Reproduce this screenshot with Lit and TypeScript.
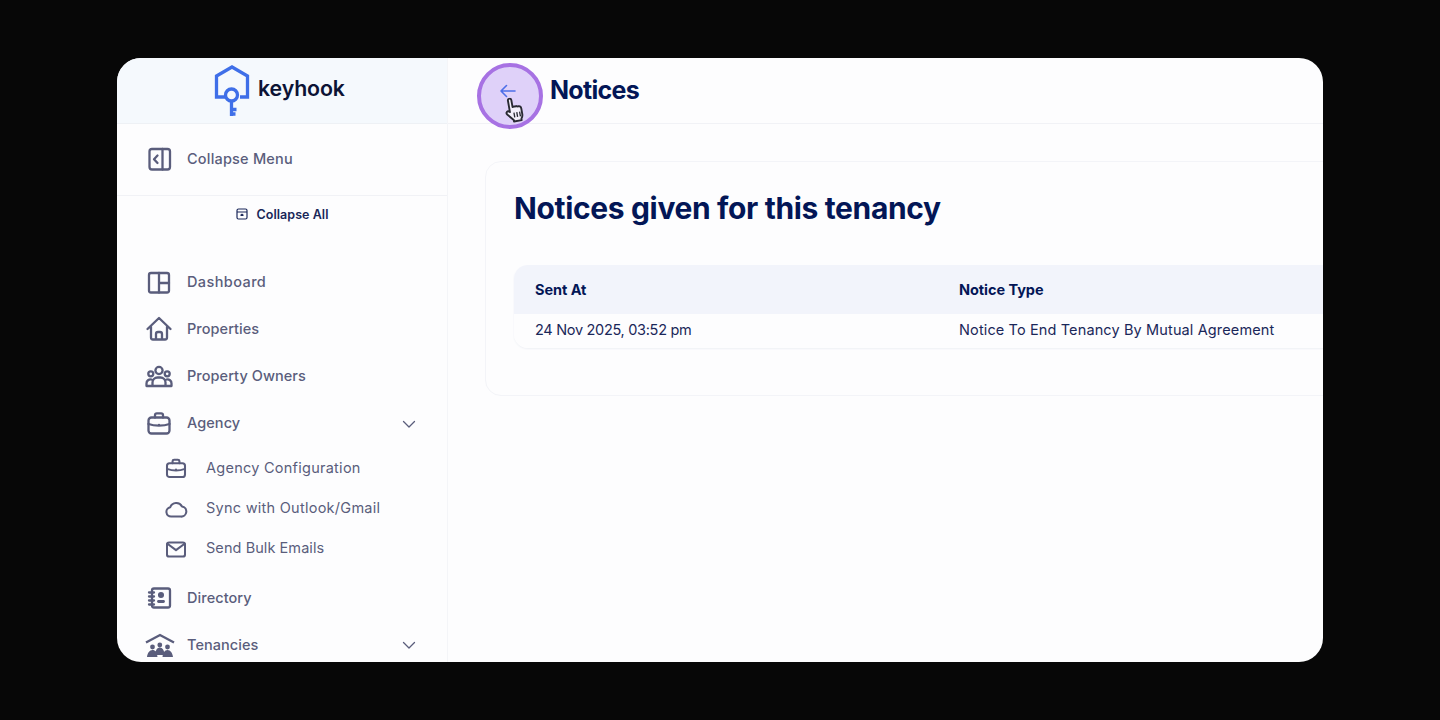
import { LitElement, html, css, svg } from "lit";
import { customElement } from "lit/decorators.js";

const ic = (c: unknown, size = 28, sw = 2.3) => html`<svg width=${size} height=${size} viewBox="0 0 28 28" fill="none" stroke="currentColor" stroke-width=${sw} stroke-linecap="round" stroke-linejoin="round">${c}</svg>`;

const briefShape = svg`<rect x="3.500" y="8.500" width="21" height="16" rx="3"/><path d="M10 8.500V6A1.800 1.800 0 0 1 11.800 4.300h4.400A1.800 1.800 0 0 1 18 6v2.500M3.500 15c6 2.200 15 2.200 21 0M14 15.800v.4"/>`;

const icons = {
  collapse: ic(svg`<rect x="3.500" y="4" width="20.500" height="20.500" rx="2.500"/><path d="M16.500 4v20.500M11.500 10.500 8 14.200l3.500 3.800"/>`),
  dash: ic(svg`<rect x="4" y="5" width="20" height="19.500" rx="2"/><path d="M14 5v19.500M14 15h10"/>`),
  home: ic(svg`<path d="M2.500 14 14 3l11.500 11M6 11.500V22.500a2 2 0 0 0 2 2h12a2 2 0 0 0 2-2V11.500M11 24.500V19a2 2 0 0 1 2-2h2a2 2 0 0 1 2 2v5.500"/>`),
  owners: ic(svg`<circle cx="14" cy="8.500" r="3.600"/><circle cx="5.800" cy="11.800" r="2.500"/><circle cx="22.200" cy="11.800" r="2.500"/><path d="M1.500 24v-2.500a4 4 0 0 1 5-4M26.500 24v-2.500a4 4 0 0 0-5-4M7.500 24v-3.500a5 5 0 0 1 5-5h3a5 5 0 0 1 5 5V24M1.500 24h25"/>`),
  brief: ic(briefShape),
  subBrief: ic(briefShape, 24, 2.4),
  cloud: ic(svg`<path d="M8.500 24a5.500 5.500 0 0 1-1.200-10.900A7.500 7.500 0 0 1 21 12.200 5.950 5.950 0 0 1 19.500 24z"/>`, 24, 2.4),
  mail: ic(svg`<rect x="3.500" y="7.500" width="21" height="16.500" rx="2.500"/><path d="m4 9 10 7.500L24 9"/>`, 24, 2.4),
  dir: ic(svg`<rect x="7" y="5.500" width="18" height="19" rx="2"/><path d="M4 9.500h5M4 13.500h5M4 17.500h5M4 21.500h5"/><circle cx="16" cy="12" r="1.900" fill="currentColor"/><path d="M13.500 18.500h5" stroke-width="2.800"/>`),
};

const tenancies = html`<svg class="ten" width="30" height="28" viewBox="0 0 30 28" fill="currentColor" stroke="none">
  <path d="M1 12.500 15 5l14 7.500" fill="none" stroke="currentColor" stroke-width="2.400"/>
  <circle cx="7.500" cy="17" r="2.400"/><circle cx="14.800" cy="15" r="2.400"/><circle cx="22.500" cy="17" r="2.400"/>
  <path d="M2 27c.5-4 2.500-7 5.500-7s4.500 2.500 5 7zM17.500 27c.5-4 2-7 5-7s5 3 5.500 7zM10 25c.5-4.500 2-7.500 4.800-7.500s4.500 3 5 7.500z"/>
</svg>`;

const chevron = html`<svg class="chev" width="16" height="16" viewBox="0 0 16 16" fill="none" stroke="currentColor" stroke-width="1.300" stroke-linecap="round" stroke-linejoin="round"><path d="m2.500 5.500 5.500 5.500 5.500-5.500"/></svg>`;

@customElement("app-root")
export class AppRoot extends LitElement {
  static styles = css`
    :host { display: block; height: 720px; background: #070707; font-family: Inter, "Open Sans", sans-serif; color: #031656; }
    .stage { height: 720px; box-sizing: border-box; padding: 58px 117px; }
    .frame { position: relative; display: flex; height: 604px; border-radius: 24px; overflow: hidden; background: #fdfdfe; }
    .side { flex: 0 0 331px; box-sizing: border-box; border-right: 1px solid #f4f5f8; display: flex; flex-direction: column; color: #5a5d7c; }
    .logo { height: 66px; flex: none; box-sizing: border-box; background: #f5f9fd; border-bottom: 1px solid #eef1f5; display: flex; align-items: flex-start; padding: 6px 0 0 96px; gap: 7px; }
    .logo-name { font-size: 21.300px; font-weight: 600; color: #0c1335; letter-spacing: -.1px; margin-top: 11px; line-height: 27px; }
    .cm { height: 72px; flex: none; box-sizing: border-box; border-bottom: 1px solid #f1f2f6; padding: 0 0 2px 29px; display: flex; align-items: center; gap: 13px; font-size: 14.500px; font-weight: 500; letter-spacing: .2px; }
    .ca { height: 36px; flex: none; display: flex; align-items: center; justify-content: center; gap: 9px; font-size: 12.500px; font-weight: 600; color: #1a2759; letter-spacing: .05px; }
    .nav { padding-top: 26px; display: flex; flex-direction: column; }
    .row { height: 47px; flex: none; display: flex; align-items: center; padding-left: 28px; gap: 14px; font-size: 14.500px; font-weight: 500; letter-spacing: .06px; }
    .row svg:first-child { flex: none; }
    .ten { margin-right: -2px; }
    .wide { letter-spacing: .4px; }
    .chev { margin: 2px 30px 0 auto; }
    .sub { display: flex; flex-direction: column; margin: 1.500px 0 6px; }
    .sub div { height: 40px; display: flex; align-items: center; padding-left: 47px; gap: 18px; font-size: 14.500px; font-weight: 400; letter-spacing: .26px; }
    .sub .tight { letter-spacing: .07px; }
    .main { flex: 1; min-width: 0; display: flex; flex-direction: column; }
    .top { height: 66px; flex: none; box-sizing: border-box; border-bottom: 1px solid #f1f2f6; padding: 0 0 1px 102px; display: flex; align-items: center; font-size: 25px; font-weight: 700; color: #031656; letter-spacing: -.7px; }
    .body { padding: 37px 0 0 37px; }
    .card { width: 1000px; height: 235px; box-sizing: border-box; border: 1px solid #f3f4f8; border-radius: 16px; padding: 0 0 0 28px; }
    h2 { margin: 0; height: 103px; padding-top: 27px; box-sizing: border-box; font-size: 30px; line-height: 38px; font-weight: 700; letter-spacing: -.35px; color: #031656; }
    .table { width: 1000px; border-radius: 14px; overflow: hidden; box-shadow: 0 1px 2px #eef0f5; font-size: 14.500px; }
    .tr { display: grid; grid-template-columns: 424px 1fr; padding-left: 21px; align-items: center; }
    .th { height: 49px; background: #f2f4fb; font-weight: 700; letter-spacing: -.05px; }
    .td { height: 34px; box-sizing: border-box; padding-bottom: 4px; background: #fdfdfe; color: #1a2759; }
    .date { letter-spacing: -.3px; }
    .type { letter-spacing: .13px; }
    .press { position: absolute; left: 360px; top: 5px; width: 66px; height: 66px; box-sizing: border-box; border-radius: 50%; background: #dfd1f9; border: 4px solid #a772e3; }
    .press svg { position: absolute; }
    .arrow { left: 17px; top: 15px; color: #4e6fe8; }
    .hand { left: 23px; top: 30px; transform: rotate(-10deg); }
  `;

  render() {
    return html`<div class="stage"><div class="frame">
      <aside class="side">
        <div class="logo">
          <svg width="38" height="54" viewBox="0 0 38 54" fill="none" stroke="#3f6fe8" stroke-width="3.300">
            <path d="M12.500 33H3.500V12L19 3l15.500 9v21H27" stroke-linejoin="miter"/>
            <circle cx="18.500" cy="31" r="6"/>
            <path d="M18.500 37v15M18.500 45.500h5M18.500 50h4"/>
          </svg>
          <span class="logo-name">keyhook</span>
        </div>
        <div class="cm">${icons.collapse}<span>Collapse Menu</span></div>
        <div class="ca">
          <svg width="12" height="12" viewBox="0 0 12 12" fill="none" stroke="currentColor" stroke-width="1.200"><rect x="1" y="1" width="10" height="10" rx="1.500"/><path d="M1 4h10M4.500 7.500 6 6.300l1.500 1.200"/></svg>
          <span>Collapse All</span>
        </div>
        <nav class="nav">
          <div class="row">${icons.dash}<span class="wide">Dashboard</span></div>
          <div class="row">${icons.home}<span>Properties</span></div>
          <div class="row">${icons.owners}<span>Property Owners</span></div>
          <div class="row">${icons.brief}<span>Agency</span>${chevron}</div>
          <div class="sub">
            <div>${icons.subBrief}<span>Agency Configuration</span></div>
            <div>${icons.cloud}<span>Sync with Outlook/Gmail</span></div>
            <div class="tight">${icons.mail}<span>Send Bulk Emails</span></div>
          </div>
          <div class="row">${icons.dir}<span>Directory</span></div>
          <div class="row">${tenancies}<span>Tenancies</span>${chevron}</div>
        </nav>
      </aside>
      <main class="main">
        <header class="top"><span>Notices</span></header>
        <div class="body"><section class="card">
          <h2>Notices given for this tenancy</h2>
          <div class="table">
            <div class="tr th"><span>Sent At</span><span>Notice Type</span></div>
            <div class="tr td"><span class="date">24 Nov 2025, 03:52 pm</span><span class="type">Notice To End Tenancy By Mutual Agreement</span></div>
          </div>
        </section></div>
      </main>
      <div class="press">
        <svg class="arrow" width="22" height="18" viewBox="0 0 22 18" fill="none" stroke="currentColor" stroke-width="1.600" stroke-linecap="round" stroke-linejoin="round"><path d="M3 9h14M8.500 3.500 3 9l5.500 5.500"/></svg>
        <svg class="hand" width="23" height="27" viewBox="0 0 24 28"><path d="M6 2.500a1.800 1.800 0 0 1 3.600 0v7.500l1.500-.4 1 .2 1.500-.2 1.200.6 1.500-.1c1.500.3 2 1.200 2 2.800V19c0 2-.7 3.200-1.700 4.400v1.600H8.500v-1.600L3 17c-1-1.400-.8-2.600 0-3.200.9-.7 2-.3 3 .8z" fill="#f4f0fb" stroke="#2a2a33" stroke-width="2" stroke-linejoin="round"/><path d="M10 16v5M13 16v5M16 16v5" stroke="#2a2a33" stroke-width="1.400"/></svg>
      </div>
    </div></div>`;
  }
}
